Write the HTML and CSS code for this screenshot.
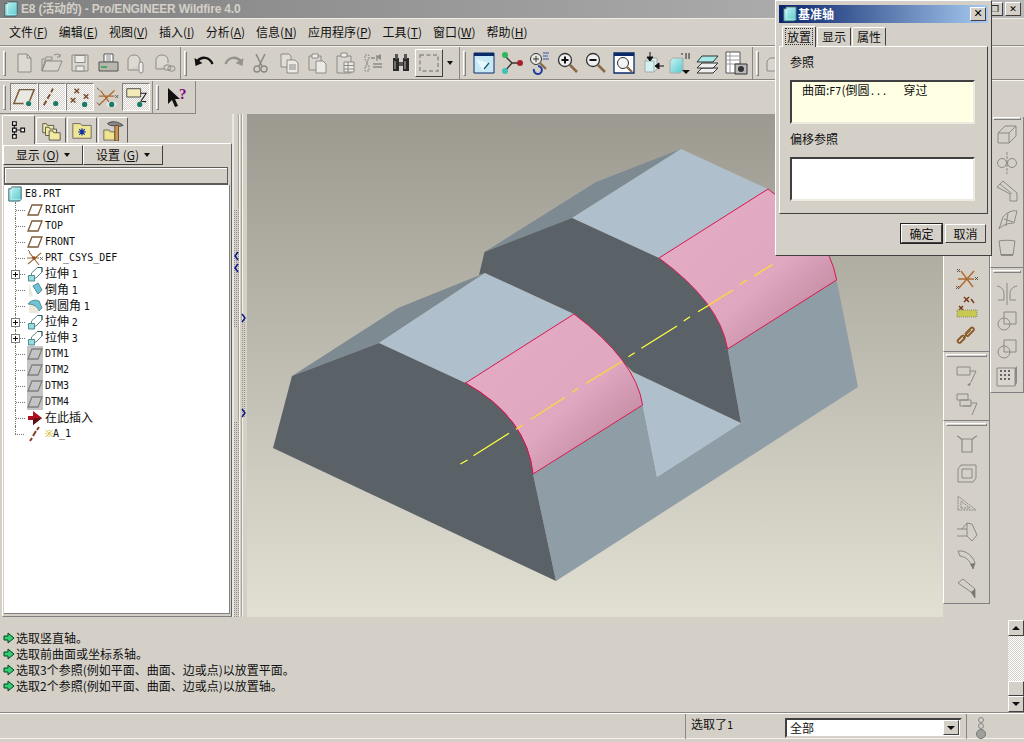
FILE: index.html
```html
<!DOCTYPE html>
<html lang="zh">
<head>
<meta charset="utf-8">
<title>E8 - Pro/ENGINEER Wildfire 4.0</title>
<link rel="stylesheet" href="styles.css">
</head>
<body>
<svg class="defs" aria-hidden="true">
<defs>
<pattern id="dots" width="2" height="2" patternUnits="userSpaceOnUse"><rect width="2" height="2" fill="#d4d0c8"/><rect width="1" height="1" fill="#8f8d85"/></pattern>
<linearGradient id="cube" x1="0" y1="0" x2="1" y2="1"><stop offset="0" stop-color="#c8f4f4"/><stop offset="1" stop-color="#58c8cc"/></linearGradient>
<linearGradient id="pink1" gradientUnits="userSpaceOnUse" x1="510" y1="350" x2="600" y2="450"><stop offset="0" stop-color="#e2abc3"/><stop offset=".6" stop-color="#dfa8c0"/><stop offset="1" stop-color="#c78ea6"/></linearGradient>
<linearGradient id="pink2" gradientUnits="userSpaceOnUse" x1="705" y1="225" x2="795" y2="325"><stop offset="0" stop-color="#e2abc3"/><stop offset=".6" stop-color="#dfa8c0"/><stop offset="1" stop-color="#c78ea6"/></linearGradient>
<linearGradient id="bg3d" x1="0" y1="0" x2="0" y2="1"><stop offset="0" stop-color="#9c9a90"/><stop offset="1" stop-color="#e2dfd3"/></linearGradient>

<symbol id="i-new" viewBox="0 0 24 24"><path d="M6 3h9l4 4v14H6z" fill="#dcd9d2" stroke="#8c8a84"/><path d="M15 3v4h4" fill="none" stroke="#8c8a84"/></symbol>
<symbol id="i-open" viewBox="0 0 24 24"><path d="M2 20V8h3l1-2h6v3H5zM2 20h16l4-10H6z" fill="#d8d5ce" stroke="#8c8a84"/><path d="M14 4c3-1.500 5-1 6 1m0-2v3h-3" fill="none" stroke="#8c8a84"/></symbol>
<symbol id="i-save" viewBox="0 0 24 24"><path d="M4 4h16v16H4z" fill="#d8d5ce" stroke="#8c8a84"/><path d="M7 4.500h10v7H7zM8 15h8v5H8z" fill="#eceae4" stroke="#8c8a84"/></symbol>
<symbol id="i-print" viewBox="0 0 24 24"><path d="M8 3h9v8H8z" fill="#fff" stroke="#555"/><path d="M10 5h5M10 7h5M10 9h5" stroke="#888"/><path d="M3 11h19v9H3z" fill="#b9b6ae" stroke="#555"/><path d="M5 17h6v-2H5z" fill="#48a868"/></symbol>
<symbol id="i-mail" viewBox="0 0 24 24"><path d="M4 19V9c0-3 3-5 6-5s6 2 6 5v5" fill="#dcd9d2" stroke="#8c8a84"/><path d="M4 19h10" stroke="#8c8a84"/><rect x="15" y="11" width="4" height="11" rx="2" fill="#eee" stroke="#8c8a84"/></symbol>
<symbol id="i-mail2" viewBox="0 0 24 24"><path d="M4 18V9c0-3 3-5 6-5s6 2 6 5v3" fill="#dcd9d2" stroke="#8c8a84"/><path d="M4 18h8" stroke="#8c8a84"/><rect x="12" y="14" width="7" height="5" rx="2.500" fill="none" stroke="#8c8a84"/><rect x="16" y="15" width="7" height="5" rx="2.500" fill="none" stroke="#8c8a84"/></symbol>
<symbol id="i-undo" viewBox="0 0 24 24"><path d="M4.500 10c4-5 12-4.500 15 3" fill="none" stroke="#111" stroke-width="2.400"/><path d="M1.500 7l1 8 7-3z" fill="#111"/></symbol>
<symbol id="i-redo" viewBox="0 0 24 24"><path d="M19.500 10c-4-5-12-4.500-15 3" fill="none" stroke="#95938c" stroke-width="2.400"/><path d="M22.500 7l-1 8-7-3z" fill="#95938c"/></symbol>
<symbol id="i-cut" viewBox="0 0 24 24"><path d="M7 3l6 12M16 3l-6 12" stroke="#8c8a84" stroke-width="1.600"/><circle cx="8" cy="18" r="3" fill="none" stroke="#8c8a84" stroke-width="1.400"/><circle cx="15" cy="18" r="3" fill="none" stroke="#8c8a84" stroke-width="1.400"/></symbol>
<symbol id="i-copy" viewBox="0 0 24 24"><path d="M4 3h8l2 2v11H4z" fill="#e0ddd6" stroke="#8c8a84"/><path d="M10 9h8l3 3v10H10z" fill="#eceae4" stroke="#8c8a84"/><path d="M12 14h7M12 16h7M12 18h7" stroke="#8c8a84"/></symbol>
<symbol id="i-paste" viewBox="0 0 24 24"><path d="M4 5h12v14H4z" fill="#d8d5ce" stroke="#8c8a84"/><path d="M7 3h6v4H7z" fill="#eee" stroke="#8c8a84"/><path d="M11 10h7l3 3v9H11z" fill="#eceae4" stroke="#8c8a84"/></symbol>
<symbol id="i-pastes" viewBox="0 0 24 24"><path d="M4 5h14v17H4z" fill="#d8d5ce" stroke="#8c8a84"/><path d="M8 2h6v4H8z" fill="#eee" stroke="#8c8a84"/><path d="M11 11h10v10H11zM11 14.500h10M11 18h10M15 11v10" fill="#eceae4" stroke="#8c8a84"/></symbol>
<symbol id="i-regen" viewBox="0 0 24 24"><path d="M4 4h4v5H4zM4 15h4v5H4z" fill="none" stroke="#8c8a84" stroke-dasharray="2 1"/><path d="M10 7l4 0m2-3v6m-4 3h9m-9 3h9M6 10v4" stroke="#8c8a84" stroke-width="1.300"/><path d="M15 6l5-3v6z" fill="#8c8a84"/></symbol>
<symbol id="i-find" viewBox="0 0 24 24"><path d="M4 7h6v13H4zM14 7h6v13h-6z" fill="#2a2a2a"/><path d="M6 3h3v5H6zM15 3h3v5h-3zM10 11h4v4h-4z" fill="#555"/><path d="M6 10v8M16 10v8" stroke="#bbb"/></symbol>
<symbol id="i-sel" viewBox="0 0 24 24"><path d="M3 4h18v16H3z" fill="none" stroke="#8c8a84" stroke-width="1.400" stroke-dasharray="4 2.500"/></symbol>
<symbol id="i-repaint" viewBox="0 0 24 24"><path d="M2 2h20v20H2z" fill="#c8e8f4" stroke="#0a2a6a"/><path d="M2 2h20v3H2z" fill="#0a2a6a"/><path d="M4 8l12 4-5 8z" fill="#e8f8ff"/><path d="M12 18l5-6" stroke="#156" stroke-width="1.200"/></symbol>
<symbol id="i-spin" viewBox="0 0 24 24"><path d="M5 5l7 7M5 20l7-8h9" stroke="#333" stroke-width="1.300" fill="none"/><circle cx="5" cy="4" r="3" fill="#2fb858"/><circle cx="5" cy="20" r="3" fill="#40c0b8"/><circle cx="20" cy="12" r="3" fill="#a8202c"/></symbol>
<symbol id="i-orient" viewBox="0 0 24 24"><circle cx="8" cy="8" r="5.500" fill="#e8e6e0" stroke="#333"/><path d="M12 12l6 6" stroke="#8a6a48" stroke-width="2.400"/><path d="M5 8h6M8 5v6" stroke="#333"/><path d="M15 2h6M15 5h5M15 8h6" stroke="#3458a8"/><path d="M6 18a4 4 0 1 0 4-3" fill="none" stroke="#2040a0" stroke-width="2"/></symbol>
<symbol id="i-zin" viewBox="0 0 24 24"><circle cx="9" cy="9" r="6.500" fill="#f0f0f0" stroke="#333" stroke-width="1.300"/><path d="M5.500 9h7M9 5.500v7" stroke="#111" stroke-width="2"/><path d="M14 14l7 7" stroke="#8a6a48" stroke-width="2.600"/></symbol>
<symbol id="i-zout" viewBox="0 0 24 24"><circle cx="9" cy="9" r="6.500" fill="#f0f0f0" stroke="#333" stroke-width="1.300"/><path d="M5.500 9h7" stroke="#111" stroke-width="2"/><path d="M14 14l7 7" stroke="#8a6a48" stroke-width="2.600"/></symbol>
<symbol id="i-zfit" viewBox="0 0 24 24"><path d="M2 2h20v20H2z" fill="#fff" stroke="#0a2a6a" stroke-width="1.300"/><path d="M2 2h20v3H2z" fill="#0a2a6a"/><circle cx="11" cy="12" r="5.500" fill="#f4f4f4" stroke="#333"/><path d="M15 16l5 5" stroke="#8a6a48" stroke-width="2.400"/></symbol>
<symbol id="i-view" viewBox="0 0 24 24"><path d="M5 10l3-3h9v11l-3 3H5z" fill="#d4f0f0" stroke="#aaa"/><path d="M5 10h9v11" fill="none" stroke="#aaa"/><path d="M10 1v8M7 6l3 4 3-4zM24 15h-8M19 12l-4 3 4 3z" fill="#111" stroke="#111"/></symbol>
<symbol id="i-saved" viewBox="0 0 24 24"><path d="M2 10l3-3h10v12l-3 3H2z" fill="url(#cube)" stroke="#aaa"/><path d="M13 3h2M18 2v6M21 2v6" stroke="#222"/><path d="M14 19h8l-4 4z" fill="#111"/></symbol>
<symbol id="i-layer" viewBox="0 0 24 24"><path d="M6 17h16l-5 5H1z" fill="#eee" stroke="#333"/><path d="M6 12h16l-5 5H1z" fill="#eee" stroke="#333"/><path d="M6 5h16l-5 6H1z" fill="#a8e8e8" stroke="#333"/></symbol>
<symbol id="i-model" viewBox="0 0 24 24"><path d="M2 1h14v21H2z" fill="#fff" stroke="#555"/><path d="M2 5h14M2 9h14M2 13h14M6 1v21" stroke="#999"/><path d="M11 13h12v10H11z" fill="#bbb" stroke="#333"/><circle cx="17" cy="18" r="3" fill="#333"/></symbol>
<symbol id="i-box" viewBox="0 0 24 24"><path d="M2 10l3-3h8v10l-3 3H2z" fill="#d8d5ce" stroke="#8c8a84"/></symbol>
<symbol id="e-plane" viewBox="0 0 26 24"><path d="M2 19L8 4h16l-6 15z" fill="#e9e8e2" stroke="#7a5a38" stroke-width="1.600"/><ellipse cx="18" cy="19" rx="5.500" ry="3" fill="#e8e8e0"/><circle cx="18" cy="19" r="2.800" fill="#1a7a6a"/></symbol>
<symbol id="e-axis" viewBox="0 0 26 24"><path d="M4 21l3-5M8 14l3-5M12 7l2-4" stroke="#7a4a28" stroke-width="2"/><ellipse cx="17" cy="19" rx="5.500" ry="3" fill="#e8e8e0"/><circle cx="17" cy="19" r="2.800" fill="#1a7a6a"/></symbol>
<symbol id="e-pnt" viewBox="0 0 26 24"><path d="M7 3l5 5M12 3l-5 5M17 9l5 5M22 9l-5 5M3 13l5 5M8 13l-5 5" stroke="#7a4a28" stroke-width="1.500"/><ellipse cx="18" cy="20" rx="5.500" ry="3" fill="#e8e8e0"/><circle cx="18" cy="20" r="2.800" fill="#1a7a6a"/></symbol>
<symbol id="e-csys" viewBox="0 0 26 24"><path d="M3 21l17-16M5 5l11 15M3 11h17" stroke="#b06a30" stroke-width="1.300"/><ellipse cx="17" cy="20" rx="5.500" ry="3" fill="#e8e8e0"/><circle cx="17" cy="20" r="2.800" fill="#1a7a6a"/><path d="M1 2l3 3M1 18l3 3M21 10l3 3M24 10l-3 3" stroke="#555"/></symbol>
<symbol id="s-csys" viewBox="0 0 24 24"><path d="M4 21L19 4M6 4l12 16M3 12h16" stroke="#b06a30" stroke-width="1.400"/><path d="M2 2l3 3M5 2L2 5M1 19l3 3M4 19l-3 3M20 10l3 3M23 10l-3 3" stroke="#555"/></symbol>
<symbol id="e-ann" viewBox="0 0 26 24"><path d="M3 3h15v9H3z" fill="#f2eab8" stroke="#444"/><path d="M18 8h6l-6 9h6" fill="none" stroke="#222" stroke-width="1.200"/><ellipse cx="17" cy="20" rx="5.500" ry="3" fill="#e8e8e0"/><circle cx="17" cy="20" r="2.800" fill="#1a7a6a"/></symbol>
<symbol id="e-help" viewBox="0 0 24 24"><path d="M3 3v16l4-4 3 7 3-1-3-7h5z" fill="#111"/><text x="14" y="14" class="help-q">?</text></symbol>
<symbol id="t-tree" viewBox="0 0 24 24"><path d="M5 3h4v4H5zM5 10h4v4H5zM5 17h4v4H5zM14 10h4v4h-4z" fill="#fff" stroke="#111" stroke-width="1.300"/><path d="M7 7v3M7 14v3M9 12h5" stroke="#111"/></symbol>
<symbol id="t-folders" viewBox="0 0 24 24"><path d="M3 5h4l1 2h7v8H3z" fill="#efe6a0" stroke="#555"/><path d="M6 9h4l1 2h7v7H6z" fill="#efe6a0" stroke="#555"/><path d="M10 13h4l1 2h7v8H10z" fill="#f2ea9c" stroke="#555"/></symbol>
<symbol id="t-favs" viewBox="0 0 24 24"><path d="M2 5h8l2 2h10v14H2z" fill="#efe694" stroke="#666"/><path d="M12 10v8M8 14h8M9 11l6 6M15 11l-6 6" stroke="#1030a0" stroke-width="1.300"/></symbol>
<symbol id="t-tools" viewBox="0 0 24 24"><path d="M2 12h6l1 2h5v9H2z" fill="#f0e48c" stroke="#666"/><path d="M6 5c4-3 11-3 17 2l-4 1-10-1z" fill="#888" stroke="#444"/><path d="M14 7h4v17h-4z" fill="#c89858" stroke="#6a4a28"/></symbol>
<symbol id="n-cube" viewBox="0 0 18 18"><path d="M2 3h3V1h11v14l-2 2H2z" fill="url(#cube)" stroke="#3f5b60"/><path d="M5 1v14M5 15h11" stroke="#e8ffff" fill="none" opacity=".5"/></symbol>
<symbol id="n-plane" viewBox="0 0 16 16"><path d="M1 13L5 3h10l-4 10z" fill="#fff" stroke="#7a5a38" stroke-width="1.300"/></symbol>
<symbol id="n-dtm" viewBox="0 0 16 16"><path d="M0 0h16v16H0z" fill="#c4c4c4"/><path d="M1 13L5 3h10l-4 10z" fill="none" stroke="#808080" stroke-width="1.300"/></symbol>
<symbol id="n-csys" viewBox="0 0 16 16"><path d="M1 14L14 3M2 2l10 13M0 8h12" stroke="#9a6a3a" stroke-width="1.100"/><circle cx="7" cy="8" r="1.800" fill="#9a4a20"/><path d="M13 7l3 3M16 7l-3 3M1 0l2 2" stroke="#555" stroke-width=".8"/></symbol>
<symbol id="n-ext" viewBox="0 0 16 16"><path d="M4.500 9V7l6-5.500h4.500V6l-6 6H8" fill="none" stroke="#4a7a80" stroke-width=".9"/><path d="M10.500 1.500L15 1.500 15 6" fill="none" stroke="#2a5a60"/><path d="M1.500 9.500h6v5.500h-6z" fill="#8fe0e0" stroke="#4a7a80" stroke-width=".9"/></symbol>
<symbol id="n-cham" viewBox="0 0 16 16"><path d="M2 15l4-1-4-13z" fill="#ece9dc"/><path d="M6 4l5-3 4 7-4 4z" fill="#6fc4d4" stroke="#5a8a98"/></symbol>
<symbol id="n-round" viewBox="0 0 16 16"><path d="M2 15V6h6l4 9z" fill="#ece9dc"/><path d="M1 6c2-3 7-5 11-3l3 7-3 3c-1-4-5-7-11-7z" fill="#6fc4d4" stroke="#5a8a98"/></symbol>
<symbol id="n-ins" viewBox="0 0 16 16"><path d="M1 6h5V1l9 7-9 7v-5H1z" fill="#b01020"/><path d="M1 9h5v6l9-7" fill="#601018"/></symbol>
<symbol id="n-axis" viewBox="0 0 16 16"><path d="M3 15l2-3M6 10l3-5M10 4l2-3" stroke="#8a3a28" stroke-width="2"/></symbol>
<symbol id="m-arrow" viewBox="0 0 12 12"><path d="M1 4h4V1l6 5-6 5V8H1z" fill="#30d070" stroke="#084020"/></symbol>
<symbol id="s-box" viewBox="0 0 24 24"><path d="M3 11l7-7h11v10l-7 7H3zM3 11h11v10M14 11l7-7" fill="none" stroke="#8c8a84"/></symbol>
<symbol id="s-revolve" viewBox="0 0 24 24"><path d="M12 1v22" stroke="#8c8a84" stroke-dasharray="3 1"/><circle cx="7" cy="12" r="4.500" fill="none" stroke="#8c8a84"/><circle cx="17" cy="12" r="4.500" fill="none" stroke="#8c8a84"/></symbol>
<symbol id="s-sweep" viewBox="0 0 24 24"><path d="M2 8l6-6 14 12v8h-7V15z" fill="none" stroke="#8c8a84"/><path d="M5 5l12 10" stroke="#8c8a84"/></symbol>
<symbol id="s-blend" viewBox="0 0 24 24"><path d="M4 21l4-12c4-5 10-7 14-6l-3 12c-5 0-12 2-15 6zM9 11l9 3M13 5l-2 13" fill="none" stroke="#8c8a84"/></symbol>
<symbol id="s-style" viewBox="0 0 24 24"><path d="M4 5c5-1 11-1 16 0l-2 14H6z" fill="none" stroke="#8c8a84"/><path d="M6 19h12" stroke="#8c8a84" stroke-width="2"/></symbol>
<symbol id="s-mirror" viewBox="0 0 24 24"><path d="M12 1v22" stroke="#8c8a84"/><path d="M2 4c5 1 7 4 7 8v6H3M22 4c-5 1-7 4-7 8v6h6" fill="none" stroke="#8c8a84"/></symbol>
<symbol id="s-merge" viewBox="0 0 24 24"><circle cx="9" cy="15" r="6" fill="none" stroke="#8c8a84"/><path d="M9 3h12v12H9z" fill="none" stroke="#8c8a84"/></symbol>
<symbol id="s-pat" viewBox="0 0 24 24"><path d="M2 4h18v18H2z" fill="#d8d5ce" stroke="#8c8a84"/><path d="M20 4l2-2v17l-2 3" fill="#8c8a84"/><path d="M5 7h2M9 7h2M13 7h2M5 11h2M9 11h2M13 11h2M5 15h2M9 15h2M13 15h2" stroke="#666" stroke-width="2"/></symbol>
<symbol id="s-pts" viewBox="0 0 24 24"><path d="M9 2l5 5M14 2l-5 5M4 11l4 4M8 11l-4 4M16 4l3 4" stroke="#7a3a1a" stroke-width="1.500"/><path d="M2 15h20v7H2z" fill="#c8c850"/><path d="M2 15h20v7H2z" fill="none" stroke="#888" stroke-dasharray="1 1"/></symbol>
<symbol id="s-chain" viewBox="0 0 24 24"><path d="M3 17l4-4c1.500-1.500 4 1 2.500 2.500l-4 4C4 21 1.500 18.500 3 17zM11 10l5-5c1.500-1.500 4 1 2.500 2.500l-5 5c-1.500 1.500-4-1-2.500-2.500z" fill="none" stroke="#8a5a28" stroke-width="1.800"/><path d="M8 15l8-8" stroke="#8a5a28"/></symbol>
<symbol id="s-ann" viewBox="0 0 24 24"><path d="M2 3h13v8H2z" fill="none" stroke="#8c8a84"/><path d="M15 7h6l-5 11" fill="none" stroke="#8c8a84"/><path d="M12 21l4-3-1 4z" fill="#8c8a84"/></symbol>
<symbol id="s-ann2" viewBox="0 0 24 24"><path d="M2 1h11v6H2zM5 7h11v6H5zM8 13h8" fill="none" stroke="#8c8a84"/><path d="M16 10h6l-5 12" fill="none" stroke="#8c8a84"/></symbol>
<symbol id="s-hole" viewBox="0 0 24 24"><path d="M2 4c3 1 4 3 4 3h12s1-2 4-3M7 7v13h10V7" fill="none" stroke="#8c8a84" stroke-width="1.200"/></symbol>
<symbol id="s-shell" viewBox="0 0 24 24"><path d="M3 8l3-4h15v13l-3 4H3z" fill="none" stroke="#8c8a84"/><path d="M7 8h10v9H7z" fill="none" stroke="#8c8a84"/></symbol>
<symbol id="s-rib" viewBox="0 0 24 24"><path d="M3 20V6l18 14zM6 18v-7l9 7z" fill="none" stroke="#8c8a84" stroke-dasharray="2 0.800"/></symbol>
<symbol id="s-draft" viewBox="0 0 24 24"><path d="M2 10h10M2 17h10V4l5 1 5 11-5 6-5-5M12 4L7 10" fill="none" stroke="#8c8a84"/></symbol>
<symbol id="s-rnd" viewBox="0 0 24 24"><path d="M3 3c8-1 15 5 17 12l-2 6c-2-7-6-12-13-13z" fill="none" stroke="#8c8a84"/><path d="M20 15l-2 6-3-5z" fill="#77756f"/></symbol>
<symbol id="s-chf" viewBox="0 0 24 24"><path d="M3 6l5-4 12 10 0 9-4-6z" fill="none" stroke="#8c8a84"/><path d="M20 12v9l-4-6z" fill="#77756f"/></symbol>
</defs>
</svg>

<div class="app">
  <header class="titlebar">
    <svg class="ico16"><use href="#n-cube"/></svg>
    <span class="title-text">E8 (活动的) - Pro/ENGINEER Wildfire 4.0</span>
    <span class="win-btns">
      <span class="win-btn restore">❐</span>
      <span class="win-btn">✕</span>
    </span>
  </header>

  <nav class="menubar">
    <span>文件(<u>F</u>)</span><span>编辑(<u>E</u>)</span><span>视图(<u>V</u>)</span><span>插入(<u>I</u>)</span><span>分析(<u>A</u>)</span><span>信息(<u>N</u>)</span><span>应用程序(<u>P</u>)</span><span>工具(<u>T</u>)</span><span>窗口(<u>W</u>)</span><span>帮助(<u>H</u>)</span>
  </nav>

  <div class="toolbar">
    <div class="tgroup">
      <i class="grip"></i>
      <span class="tb"><svg><use href="#i-new"/></svg></span>
      <span class="tb"><svg><use href="#i-open"/></svg></span>
      <span class="tb"><svg><use href="#i-save"/></svg></span>
      <span class="tb"><svg><use href="#i-print"/></svg></span>
      <span class="tb"><svg><use href="#i-mail"/></svg></span>
      <span class="tb"><svg><use href="#i-mail2"/></svg></span>
    </div>
    <div class="tgroup">
      <i class="grip"></i>
      <span class="tb"><svg><use href="#i-undo"/></svg></span>
      <span class="tb"><svg><use href="#i-redo"/></svg></span>
      <span class="tb"><svg><use href="#i-cut"/></svg></span>
      <span class="tb"><svg><use href="#i-copy"/></svg></span>
      <span class="tb"><svg><use href="#i-paste"/></svg></span>
      <span class="tb"><svg><use href="#i-pastes"/></svg></span>
      <span class="tb"><svg><use href="#i-regen"/></svg></span>
      <span class="tb"><svg><use href="#i-find"/></svg></span>
      <span class="tb tb-up"><svg><use href="#i-sel"/></svg></span>
      <span class="tb-drop"></span>
    </div>
    <div class="tgroup">
      <i class="grip"></i>
      <span class="tb"><svg><use href="#i-repaint"/></svg></span>
      <span class="tb"><svg><use href="#i-spin"/></svg></span>
      <span class="tb"><svg><use href="#i-orient"/></svg></span>
      <span class="tb"><svg><use href="#i-zin"/></svg></span>
      <span class="tb"><svg><use href="#i-zout"/></svg></span>
      <span class="tb"><svg><use href="#i-zfit"/></svg></span>
      <span class="tb"><svg><use href="#i-view"/></svg></span>
      <span class="tb"><svg><use href="#i-saved"/></svg></span>
      <span class="tb"><svg><use href="#i-layer"/></svg></span>
      <span class="tb"><svg><use href="#i-model"/></svg></span>
    </div>
    <div class="tgroup tgroup-open">
      <i class="grip"></i>
      <span class="tb"><svg><use href="#i-box"/></svg></span>
    </div>
  </div>

  <div class="toolbar">
    <div class="tgroup">
      <i class="grip"></i>
      <span class="tb on"><svg><use href="#e-plane"/></svg></span>
      <span class="tb on"><svg><use href="#e-axis"/></svg></span>
      <span class="tb on"><svg><use href="#e-pnt"/></svg></span>
      <span class="tb"><svg><use href="#e-csys"/></svg></span>
      <span class="tb on"><svg><use href="#e-ann"/></svg></span>
    </div>
    <div class="tgroup tgroup-help">
      <i class="grip"></i>
      <span class="tb"><svg><use href="#e-help"/></svg></span>
    </div>
  </div>

  <main class="main">
    <aside class="left">
      <div class="tabs">
        <span class="ltab active"><svg><use href="#t-tree"/></svg></span>
        <span class="ltab"><svg><use href="#t-folders"/></svg></span>
        <span class="ltab"><svg><use href="#t-favs"/></svg></span>
        <span class="ltab"><svg><use href="#t-tools"/></svg></span>
      </div>
      <div class="panel">
        <div class="panel-btns">
          <span class="pbtn"><span>显示 (<u>O</u>)</span><i class="caret"></i></span>
          <span class="pbtn"><span>设置 (<u>G</u>)</span><i class="caret"></i></span>
        </div>
        <div class="searchbar"></div>
        <div class="tree">
          <div class="root"><svg class="ico16"><use href="#n-cube"/></svg><span class="lat">E8.PRT</span></div>
          <div class="nodes">
            <div class="node"><i class="conn"></i><svg><use href="#n-plane"/></svg><span class="lat">RIGHT</span></div>
            <div class="node"><i class="conn"></i><svg><use href="#n-plane"/></svg><span class="lat">TOP</span></div>
            <div class="node"><i class="conn"></i><svg><use href="#n-plane"/></svg><span class="lat">FRONT</span></div>
            <div class="node"><i class="conn"></i><svg><use href="#n-csys"/></svg><span class="lat">PRT_CSYS_DEF</span></div>
            <div class="node"><i class="conn"><b class="exp"></b></i><svg><use href="#n-ext"/></svg><span>拉伸 <span class="lat">1</span></span></div>
            <div class="node"><i class="conn"></i><svg><use href="#n-cham"/></svg><span>倒角 <span class="lat">1</span></span></div>
            <div class="node"><i class="conn"></i><svg><use href="#n-round"/></svg><span>倒圆角 <span class="lat">1</span></span></div>
            <div class="node"><i class="conn"><b class="exp"></b></i><svg><use href="#n-ext"/></svg><span>拉伸 <span class="lat">2</span></span></div>
            <div class="node"><i class="conn"><b class="exp"></b></i><svg><use href="#n-ext"/></svg><span>拉伸 <span class="lat">3</span></span></div>
            <div class="node"><i class="conn"></i><svg><use href="#n-dtm"/></svg><span class="lat">DTM1</span></div>
            <div class="node"><i class="conn"></i><svg><use href="#n-dtm"/></svg><span class="lat">DTM2</span></div>
            <div class="node"><i class="conn"></i><svg><use href="#n-dtm"/></svg><span class="lat">DTM3</span></div>
            <div class="node"><i class="conn"></i><svg><use href="#n-dtm"/></svg><span class="lat">DTM4</span></div>
            <div class="node"><i class="conn"></i><svg><use href="#n-ins"/></svg><span class="ins-label">在此插入</span></div>
            <div class="node"><i class="conn conn-end"></i><svg><use href="#n-axis"/></svg><span class="lat"><span class="star">※</span>A_1</span></div>
          </div>
        </div>
      </div>
    </aside>

    <div class="sash">
      <svg viewBox="0 0 15 503" width="15" height="503">
        <path d="M1 0v503" stroke="#fff"/><path d="M6.500 0v503M9.500 0v503" stroke="#a8a59c"/><path d="M7.500 0v503M10.500 0v503" stroke="#f4f2ec"/>
        <path class="sash-dots" d="M2 95h5v118H2zM2 307h5v196H2zM9 206h5v97H9z"/>
        <path d="M6 138l-3 4 3 4M6 150l-3 4 3 4M10 200l3 4-3 4M10 295l3 4-3 4" fill="none" stroke="#0a1a8a" stroke-width="1.500"/>
      </svg>
    </div>

    <div class="viewport">
      <svg viewBox="247 114 696 503" width="696" height="503" preserveAspectRatio="none">
        <rect x="247" y="114" width="696" height="503" fill="url(#bg3d)"/>
        <polygon fill="#8f9da6" points="533,474 642.600,405 657,477 741,423 727.600,349 836.600,280 858,387 556,581"/>
        <polygon fill="#afc0cc" points="633,372 741,423 657,477 642.600,405"/>
        <polygon fill="#7d8a92" points="292,376 398,308 475,277 485,273 379,343"/>
        <polygon fill="#7d8a92" points="484.500,252 596,182 681,149 572,218"/>
        <polygon fill="#afc0cc" points="379,343 485,273 574,314 465.500,383"/>
        <polygon fill="#afc0cc" points="572,218 681,149 768,189 659,258"/>
        <path fill="#5a6268" d="M479 275L484.500 252L572 218L659 258Q720 302.500 727.600 349L741 423L633 372L574 314L485 273Z"/>
        <path fill="url(#pink2)" d="M659 258L768 189Q829 233.500 836.600 280L727.600 349Q720 302.500 659 258Z"/>
        <path fill="none" stroke="#d81850" stroke-width="1" d="M659 258L768 189Q829 233.500 836.600 280L727.600 349Q720 302.500 659 258Z"/>
        <path fill="url(#pink1)" d="M465.500 383L574 314Q636 360.500 642.600 405L533 474Q527 417.500 465.500 383Z"/>
        <path fill="none" stroke="#d81850" stroke-width="1" d="M465.500 383L574 314Q636 360.500 642.600 405L533 474Q527 417.500 465.500 383Z"/>
        <path fill="#5a6268" d="M273 448L292 376L379 343L465.500 383Q527 417.500 533 474L556 581Z"/>
        <path fill="none" stroke="#d81850" stroke-width="1" d="M465.500 383Q527 417.500 533 474"/>
        <path class="axis-y" d="M460.400 464L467.500 460M473.400 455.700L509 433.300M628.400 356.700L634.700 352.700M641.400 348.300L677 326M683.700 321L690 316.700M698 311.700L708 305.700"/>
        <path class="axis-o" d="M516 429.300L522.800 425M530.800 419.300L565 397.300M572 392.300L578 388.300M586 383.300L621.700 361.700M708 305.700L733 290M740 284.300L747 280M754 276L772.700 264.300"/>
      </svg>
    </div>

    <div class="rtools">
      <div class="rcol rcol-a">
        <div class="rgroup rg-1">
          <span class="rt"><svg><use href="#s-csys"/></svg></span>
          <span class="rt"><svg><use href="#s-pts"/></svg></span>
          <span class="rt"><svg><use href="#s-chain"/></svg></span>
        </div>
        <div class="rgroup rg-2">
          <i class="hgrip"></i>
          <span class="rt"><svg><use href="#s-ann"/></svg></span>
          <span class="rt"><svg><use href="#s-ann2"/></svg></span>
        </div>
        <div class="rgroup rg-3">
          <i class="hgrip"></i>
          <span class="rt"><svg><use href="#s-hole"/></svg></span>
          <span class="rt"><svg><use href="#s-shell"/></svg></span>
          <span class="rt"><svg><use href="#s-rib"/></svg></span>
          <span class="rt"><svg><use href="#s-draft"/></svg></span>
          <span class="rt"><svg><use href="#s-rnd"/></svg></span>
          <span class="rt"><svg><use href="#s-chf"/></svg></span>
        </div>
      </div>
      <div class="rcol rcol-b">
        <div class="rgroup rg-4">
          <i class="hgrip"></i>
          <span class="rt"><svg><use href="#s-box"/></svg></span>
          <span class="rt"><svg><use href="#s-revolve"/></svg></span>
          <span class="rt"><svg><use href="#s-sweep"/></svg></span>
          <span class="rt"><svg><use href="#s-blend"/></svg></span>
          <span class="rt"><svg><use href="#s-style"/></svg></span>
        </div>
        <div class="rgroup rg-5">
          <i class="hgrip"></i>
          <span class="rt"><svg><use href="#s-mirror"/></svg></span>
          <span class="rt"><svg><use href="#s-merge"/></svg></span>
          <span class="rt"><svg><use href="#s-merge"/></svg></span>
          <span class="rt"><svg><use href="#s-pat"/></svg></span>
        </div>
      </div>
    </div>
  </main>

  <section class="messages">
    <div class="msg-list">
      <div class="msg"><svg><use href="#m-arrow"/></svg>选取竖直轴。</div>
      <div class="msg"><svg><use href="#m-arrow"/></svg>选取前曲面或坐标系轴。</div>
      <div class="msg"><svg><use href="#m-arrow"/></svg>选取3个参照(例如平面、曲面、边或点)以放置平面。</div>
      <div class="msg"><svg><use href="#m-arrow"/></svg>选取2个参照(例如平面、曲面、边或点)以放置轴。</div>
    </div>
    <div class="scrollbar">
      <span class="sb-btn"><i class="tri-up"></i></span>
      <span class="sb-track"></span>
      <span class="sb-thumb"></span>
      <span class="sb-btn"><i class="tri-down"></i></span>
    </div>
  </section>

  <footer class="status">
    <span class="st-empty"></span>
    <span class="st-sel">选取了<span class="lat">1</span></span>
    <span class="combo"><span class="combo-val">全部</span><span class="combo-btn"><i class="tri-down"></i></span></span>
    <span class="st-light">
      <svg viewBox="0 0 10 24" width="10" height="24"><circle cx="5" cy="4" r="2.500" fill="none" stroke="#888"/><circle cx="5" cy="10" r="2.500" fill="none" stroke="#888"/><circle cx="5" cy="18" r="4.500" fill="#a0a09a" stroke="#777"/></svg>
    </span>
  </footer>

  <div class="dialog">
    <div class="dlg-title">
      <svg class="ico16"><use href="#n-cube"/></svg>
      <span class="dlg-name">基准轴</span>
      <span class="dlg-close">✕</span>
    </div>
    <div class="dlg-tabs">
      <span class="dtab dtab-on"><span class="focus">放置</span></span>
      <span class="dtab">显示</span>
      <span class="dtab">属性</span>
    </div>
    <div class="dlg-panel">
      <div class="dlg-label">参照</div>
      <div class="listbox listbox-y"><span>曲面:<span class="lat">F7</span>(倒圆<span class="lat">...</span></span><span class="through">穿过</span></div>
      <div class="dlg-label dlg-label-2">偏移参照</div>
      <div class="listbox"></div>
    </div>
    <div class="dlg-btns">
      <span class="dbtn dbtn-def">确定</span>
      <span class="dbtn">取消</span>
    </div>
  </div>
</div>
</body>
</html>
```

FILE: styles.css
```css
* { box-sizing: border-box; }
html, body { margin: 0; padding: 0; }
body { width: 1024px; height: 742px; overflow: hidden; background: #d4d0c8; font: 12px/16px "Noto Sans CJK SC", "Liberation Sans", sans-serif; color: #111; }
svg { display: block; }
u { text-decoration: underline; }
i, b { font-style: normal; font-weight: normal; }
.defs { position: absolute; width: 0; height: 0; }
.help-q { font: bold 15px "Liberation Serif", serif; fill: #800080; }
.lat { font-family: "DejaVu Sans Mono", monospace; font-size: 10px; }
.ico16 { width: 16px; height: 16px; flex: none; }

.app { position: relative; width: 1024px; height: 742px; display: flex; flex-direction: column; overflow: hidden; }

.titlebar { height: 19px; flex: none; display: flex; align-items: center; gap: 2px; padding: 0 3px; background: linear-gradient(90deg, #808080, #b8b8b8); border-bottom: 1px solid #ecebe6; }
.title-text { font: bold 12px/16px "Liberation Sans", "Noto Sans CJK SC", sans-serif; color: #d4d0c8; letter-spacing: -0.18px; }
.win-btns { margin-left: auto; display: flex; gap: 1px; }
.win-btn { width: 16px; height: 14px; background: #d4d0c8; border: 1px solid; border-color: #fff #404040 #404040 #fff; font-size: 9px; line-height: 12px; text-align: center; color: #000; font-family: "DejaVu Sans", sans-serif; }
.restore { margin-right: 1px; }

.menubar { height: 27px; flex: none; display: flex; align-items: center; gap: 11px; padding: 0 9px 1px; border-bottom: 1px solid #8a8880; }

.toolbar { height: 34px; flex: none; display: flex; border-top: 1px solid #f6f5f1; border-bottom: 1px solid #8a8880; }
.toolbar + .toolbar { height: 34px; border-bottom: 0; }
.tgroup { display: flex; align-items: center; padding: 0 2px 0 3px; border-right: 1px solid #8a8880; }
.tgroup-open { border-right: 0; flex: 1; }
.tgroup-help { padding-right: 4px; }
.toolbar + .toolbar .tgroup { height: 33px; border-bottom: 1px solid #8a8880; }
.grip { width: 3px; height: 25px; margin-right: 4px; border: 1px solid; border-color: #fff #808080 #808080 #fff; }
.tb { width: 28px; height: 28px; display: flex; align-items: center; justify-content: center; }
.tb svg { width: 24px; height: 24px; }
.tb-up { border: 1px solid; border-color: #fff #404040 #404040 #fff; }
.tb-drop { width: 14px; height: 28px; display: flex; align-items: center; justify-content: center; }
.tb-drop::after { content: ""; border: 3px solid transparent; border-top: 4px solid #111; border-bottom: 0; }
.tb.on { background: repeating-conic-gradient(#fff 0 25%, #d4d0c8 0 50%) 0 0 / 2px 2px; border: 1px solid; border-color: #808080 #fff #fff #808080; }

.main { flex: 1; min-height: 0; display: flex; }

.left { width: 232px; flex: none; display: flex; flex-direction: column; padding-left: 2px; }
.tabs { height: 29px; display: flex; align-items: flex-end; gap: 1px; position: relative; z-index: 1; }
.ltab { width: 30px; height: 26px; display: flex; align-items: center; justify-content: center; border: 1px solid; border-color: #fff #606060 #d4d0c8 #fff; border-radius: 2px 2px 0 0; }
.ltab svg { width: 22px; height: 22px; }
.ltab.active { width: 33px; height: 29px; margin-bottom: -1px; border-bottom: 0; background: #d4d0c8; }
.panel { flex: 1; min-height: 0; display: flex; flex-direction: column; padding: 1px 1px 2px 0; border: 1px solid; border-color: #fff #606060 #808080 #fff; }
.panel-btns { display: flex; height: 20px; flex: none; }
.pbtn { width: 80px; height: 20px; display: flex; align-items: center; justify-content: center; gap: 5px; border: 1px solid; border-color: #fff #404040 #404040 #fff; }
.caret { border: 3.500px solid transparent; border-top: 4px solid #111; border-bottom: 0; }
.searchbar { height: 18px; flex: none; margin: 2px 2px 0 1px; background: #d4d0c8; border: solid #5c5c58; border-width: 1px 1px 2px 1px; box-shadow: inset 1px 1px 0 #fff; }
.tree { flex: 1; min-height: 0; margin-left: 1px; padding-top: 1px; background: #fff; border-right: 1px solid #808080; border-bottom: 1px solid #808080; overflow: hidden; }
.root { height: 16px; display: flex; align-items: center; gap: 2px; padding-left: 3px; }
.nodes { padding-left: 11px; }
.node { height: 16px; display: flex; align-items: center; gap: 1px; }
.node svg { width: 16px; height: 16px; flex: none; margin-right: 2px; margin-left: 1px; }
.node svg + span { margin-left: -1px; }
.ins-label { margin-top: -3px; }
.conn { position: relative; width: 10px; height: 16px; flex: none; border-left: 1px dotted #777; background: repeating-linear-gradient(90deg, #777 0 1px, transparent 1px 2px) 0 8px / 100% 1px no-repeat; }
.conn-end { border-left: 0; }
.conn-end::before { content: ""; position: absolute; left: 0; top: 0; height: 8px; border-left: 1px dotted #777; }
.exp { position: absolute; left: -5px; top: 4px; width: 9px; height: 9px; border: 1px solid #808080; background: linear-gradient(#111, #111) center / 5px 1px no-repeat, linear-gradient(#111, #111) center / 1px 5px no-repeat, #fff; }
.star { color: #c8b000; }

.sash { width: 15px; flex: none; }
.sash-dots { fill: url(#dots); }

.viewport { width: 696px; flex: none; }
.axis-y { fill: none; stroke: #ffff40; stroke-width: 1.300; }
.axis-o { fill: none; stroke: #fbd050; stroke-width: 1.500; }

.rtools { flex: 1; display: flex; align-items: flex-start; }
.rcol { display: flex; flex-direction: column; }
.rcol-a { width: 47px; }
.rcol-b { width: 34px; padding-top: 3px; }
.rgroup { display: flex; flex-direction: column; align-items: center; border-right: 1px solid #808080; border-bottom: 1px solid #808080; border-left: 1px solid #fff; }
.rt { width: 28px; height: 29px; display: flex; align-items: center; justify-content: center; }
.rt svg { width: 24px; height: 24px; }
.hgrip { width: calc(100% - 4px); height: 3px; margin: 2px 0 4px; flex: none; border: 1px solid; border-color: #fff #808080 #808080 #fff; }
.rg-1 { height: 238px; justify-content: flex-end; padding-bottom: 2px; }
.rg-1 .rt { height: 28px; }
.rg-2 { height: 69px; }
.rg-3 { height: 183px; }
.rg-4 { height: 151px; }
.rg-4 .rt { height: 28.500px; }
.rg-4 .hgrip { margin: 0; }
.rg-5 { height: 125px; }
.rg-5 .rt { height: 27.500px; }
.rg-5 .hgrip { margin-bottom: 7px; }

.messages { height: 95px; flex: none; display: flex; }
.msg-list { flex: 1; padding-top: 13px; }
.msg { height: 16px; display: flex; align-items: center; gap: 1px; padding-left: 3px; }
.msg svg { width: 12px; height: 12px; flex: none; }
.scrollbar { width: 16px; flex: none; margin-top: 3px; display: flex; flex-direction: column; }
.sb-btn { height: 16px; flex: none; display: flex; align-items: center; justify-content: center; border: 1px solid; border-color: #fff #404040 #404040 #fff; }
.sb-track { flex: 1; background: repeating-conic-gradient(#fff 0 25%, #d4d0c8 0 50%) 0 0 / 2px 2px; }
.sb-thumb { height: 15px; flex: none; border: 1px solid; border-color: #fff #404040 #404040 #fff; }
.tri-up { border: 4px solid transparent; border-bottom: 4px solid #111; border-top: 0; }
.tri-down { border: 4px solid transparent; border-top: 4px solid #111; border-bottom: 0; }

.status { height: 30px; flex: none; display: flex; border-top: 1px solid #8a8880; box-shadow: inset 0 1px 0 #fff, inset 0 -3px 0 #d4d0c8, inset 0 -4px 0 #f2f1ec; padding: 1px 0 3px; }
.st-empty { width: 686px; flex: none; border-right: 1px solid #8a8880; }
.st-sel { width: 99px; flex: none; padding: 2px 0 0 5px; }
.combo { width: 177px; height: 20px; flex: none; margin-top: 4px; display: flex; justify-content: space-between; background: #fff; border: 2px solid; border-color: #404040 #d4d0c8 #d4d0c8 #404040; padding-left: 3px; line-height: 15px; }
.combo-btn { width: 16px; height: 15px; margin: 0 1px; display: flex; align-items: center; justify-content: center; background: #d4d0c8; border: 1px solid; border-color: #fff #404040 #404040 #fff; }
.st-light { margin-left: 4px; width: 58px; flex: none; border-left: 1px solid #8a8880; padding: 2px 0 0 9px; }

.dialog { position: absolute; left: 775px; top: 0; width: 217px; height: 256px; background: #d4d0c8; padding: 4px 3px 0 3px; border: 1px solid; border-color: #fff #404040 #404040 #fff; display: flex; flex-direction: column; }
.dlg-title { height: 18px; flex: none; display: flex; align-items: center; gap: 0; padding: 0 2px 0 3px; background: linear-gradient(90deg, #0a246a, #a6caf0); }
.dlg-name { color: #fff; font-weight: bold; font-size: 12px; }
.dlg-close { margin-left: auto; width: 16px; height: 14px; background: #d4d0c8; border: 1px solid; border-color: #fff #404040 #404040 #fff; font: bold 11px/12px "DejaVu Sans", sans-serif; text-align: center; color: #000; }
.dlg-tabs { height: 23px; flex: none; display: flex; align-items: flex-end; padding-left: 3px; gap: 1px; position: relative; z-index: 1; }
.dtab { height: 19px; padding: 0 4px; line-height: 18px; border: 1px solid; border-color: #fff #404040 #d4d0c8 #fff; border-radius: 2px 2px 0 0; }
.dtab-on { height: 21px; margin-bottom: -1px; padding: 1px 2px; border-bottom: 0; background: #d4d0c8; }
.focus { display: block; padding: 0 2px; outline: 1px dotted #333; outline-offset: -1px; line-height: 17px; }
.dlg-panel { height: 168px; flex: none; padding: 7px 12px 0 10px; border: 1px solid; border-color: #fff #404040 #404040 #fff; }
.dlg-label { height: 16px; }
.dlg-label-2 { margin-top: 7px; }
.listbox { height: 44px; margin-top: 10px; padding: 0 10px; display: flex; background: #fff; border: 2px solid; border-color: #404040 #eeeae0 #eeeae0 #404040; }
.listbox-y { background: #ffffe4; }
.through { margin-left: 16px; }
.dlg-btns { flex: 1; display: flex; justify-content: flex-end; align-items: flex-start; gap: 3px; padding: 10px 2px 0 0; }
.dbtn { width: 41px; height: 19px; line-height: 17px; text-align: center; border: 1px solid; border-color: #fff #404040 #404040 #fff; }
.dbtn-def { outline: 1px solid #222; }
```
